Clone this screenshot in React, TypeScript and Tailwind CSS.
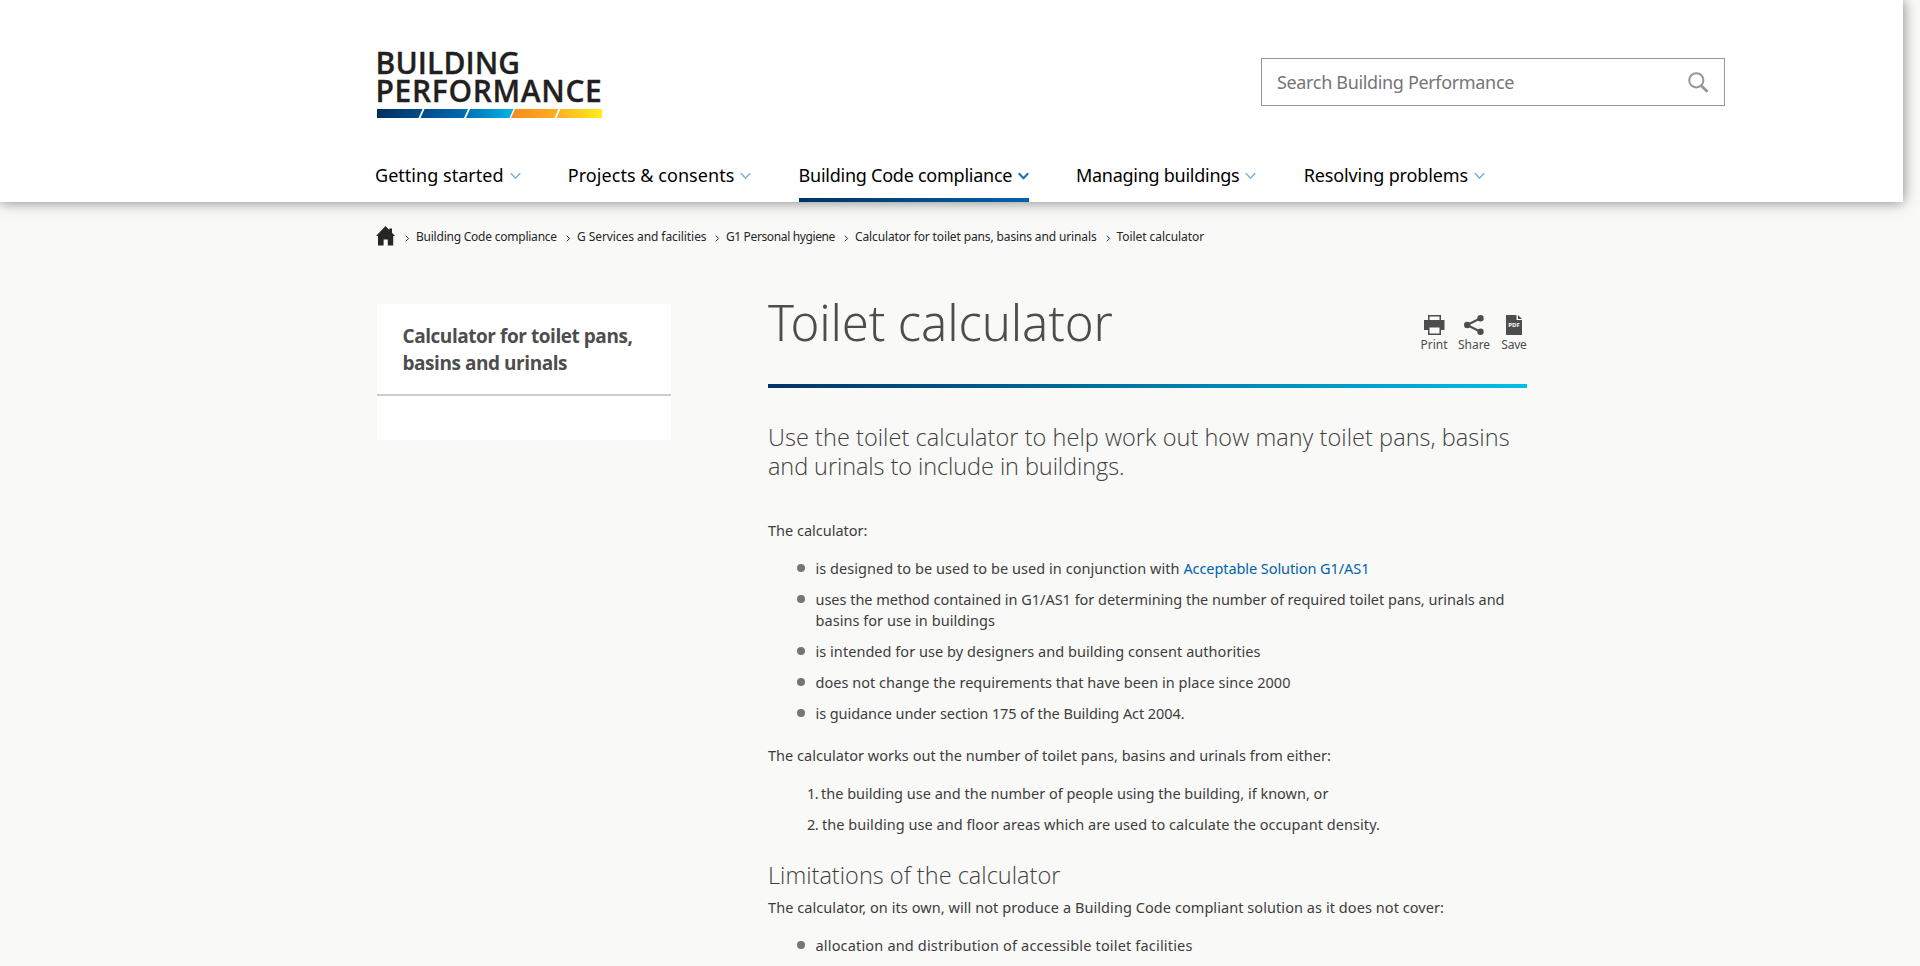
import type { ReactNode } from "react";

function Chevron({ active = false }: { active?: boolean }) {
  return (
    <svg
      width="11"
      height="8"
      viewBox="0 0 11 8"
      fill="none"
      strokeWidth={active ? 2 : 1.6}
      className={active ? "mt-0.5 shrink-0 stroke-[#1470b8]" : "mt-0.5 shrink-0 stroke-[#7fb2dc]"}
    >
      <path d="M0.8 1.2 5.5 6.2 10.2 1.2" />
    </svg>
  );
}

function Logo() {
  return (
    <a className="flex w-[225px] flex-col whitespace-nowrap font-['Open_Sans',sans-serif] text-[30px] font-semibold leading-[28px] text-[#231f20] [-webkit-text-stroke:0.3px_#231f20]">
      <span className="-ml-[1.500px] tracking-[0.100px]">BUILDING</span>
      <span className="-ml-[1.500px] tracking-[0.650px]">PERFORMANCE</span>
      <svg width="225" height="9" viewBox="0 0 225 9" className="mt-1">
        <defs>
          <linearGradient id="blue" x1="0" x2="136" y1="0" y2="0" gradientUnits="userSpaceOnUse">
            <stop offset="0" stopColor="#00305f" />
            <stop offset="0.6" stopColor="#0065ad" />
            <stop offset="1" stopColor="#00b5e6" />
          </linearGradient>
          <linearGradient id="gold" x1="134" x2="225" y1="0" y2="0" gradientUnits="userSpaceOnUse">
            <stop offset="0" stopColor="#f68b1f" />
            <stop offset="0.5" stopColor="#fdb022" />
            <stop offset="1" stopColor="#ffed1c" />
          </linearGradient>
        </defs>
        <path fill="url(#blue)" d="M0 0H45.5L41.5 9H0ZM47.5 0H91L87 9H43.5ZM93 0H136.500L132.500 9H89Z" />
        <path fill="url(#gold)" d="M138 0H181.500L177.500 9H134ZM183.500 0H225V9H179.500Z" />
      </svg>
    </a>
  );
}

const navItems = [
  { label: "Getting started", box: "w-[128.500px]", track: "tracking-[0.030px]" },
  { label: "Projects & consents", box: "w-[166.500px]", track: "tracking-[0.050px]" },
  { label: "Building Code compliance", box: "w-[213px]", track: "tracking-[-0.250px]", active: true },
  { label: "Managing buildings", box: "w-[163.500px]", track: "tracking-[-0.260px]" },
  { label: "Resolving problems", box: "w-[164px]", track: "tracking-[-0.120px]" },
];

const crumbs = [
  { label: "Building Code compliance", box: "w-[141px]", track: "tracking-[-0.230px]" },
  { label: "G Services and facilities", box: "w-[129px]", track: "tracking-[-0.070px]" },
  { label: "G1 Personal hygiene", box: "w-[109px]", track: "tracking-[-0.370px]" },
  { label: "Calculator for toilet pans, basins and urinals", box: "w-[241.500px]", track: "tracking-[-0.130px]" },
  { label: "Toilet calculator", box: "w-[87px]", track: "tracking-[-0.060px]" },
];

function Header() {
  return (
    <header className="relative h-[202px] w-[1903px] bg-white shadow-[0_0_13px_rgba(0,0,0,0.5)]">
      <div className="flex h-[148px] items-start justify-between pl-[377px] pr-[178px]">
        <div className="pt-[49px]">
          <Logo />
        </div>
        <div className="mt-[58px] flex h-12 w-[464px] items-center justify-between border border-[#979797] bg-white pl-[15px] pr-[15px]">
          <span className="whitespace-nowrap text-lg tracking-[-0.340px] text-[#757575]">Search Building Performance</span>
          <svg width="21" height="21" viewBox="0 0 21 21" fill="none" className="stroke-[#979797]">
            <circle cx="8.300" cy="8.300" r="7.100" strokeWidth="2" />
            <path d="M13 13.500 19.500 19.700" strokeWidth="2.800" />
          </svg>
        </div>
      </div>
      <nav className="flex gap-[47.300px] pl-[375px]">
        {navItems.map((n) => (
          <a key={n.label} className="flex h-[54px] flex-col justify-between">
            <span className="flex items-center gap-[6px] whitespace-nowrap pt-[15px] text-lg leading-6 text-black">
              <span className={`${n.box} ${n.track}`}>{n.label}</span>
              <Chevron active={n.active} />
            </span>
            {n.active && <span className="h-1 bg-linear-to-r from-[#003366] to-[#0062ac]" />}
          </a>
        ))}
      </nav>
    </header>
  );
}

function Breadcrumb() {
  return (
    <div className="flex h-5 items-center whitespace-nowrap text-[12px] leading-5 text-[#262626]">
      <svg width="19" height="20" viewBox="0 0 19 20" className="-ml-px mr-px fill-[#262626]">
        <path d="M9.500 0 13.300 3.900V2.500H16V6.700L19 10H17.200V19.500H11.800V13.500H7.600V19.500H2V10H0Z" />
      </svg>
      {crumbs.map((c) => (
        <span key={c.label} className="flex items-center pt-0.5">
          <svg width="5" height="7" viewBox="0 0 5 7" fill="none" className="ml-[9px] mr-[6px] mt-0.5 stroke-[#262626]">
            <path d="M0.800 0.700 3.600 3.500 0.800 6.300" />
          </svg>
          <span className={`${c.box} ${c.track}`}>{c.label}</span>
        </span>
      ))}
    </div>
  );
}

function Tools() {
  return (
    <div className="flex text-[12px] leading-[14px] text-[#4d4d4d]">
      <a className="flex w-[28px] flex-col items-center">
        <svg width="21" height="20" viewBox="0 0 21 20" className="fill-[#4d4d4d]">
          <path fillRule="evenodd" d="M4 0H17V5H20.500V15H17V20H4V15H0V5H4ZM5.500 1.500V5H15.500V1.500ZM5.500 12.500V18.500H15.500V12.500Z" />
        </svg>
        <span className="pt-[3px]">Print</span>
      </a>
      <a className="ml-[10px] flex w-[32px] flex-col items-center">
        <svg width="20" height="20" viewBox="0 0 20 20" className="fill-[#4d4d4d]">
          <path d="M17 3 3 10 17 17" fill="none" stroke="#4d4d4d" strokeWidth="2" />
          <circle cx="16.500" cy="3.200" r="3.200" />
          <circle cx="3.200" cy="10" r="3.200" />
          <circle cx="16.500" cy="16.800" r="3.200" />
        </svg>
        <span className="pt-[3px]">Share</span>
      </a>
      <a className="ml-[11px] flex w-[26px] flex-col items-center">
        <svg width="16" height="20" viewBox="0 0 16 20">
          <path className="fill-[#4d4d4d]" d="M0 0H10.500V5H16V20H0ZM12 0 16 4H12Z" />
          <text x="8" y="12.300" textAnchor="middle" fontSize="6" fontWeight="700" fill="#fff" textLength="11.500" lengthAdjust="spacingAndGlyphs">PDF</text>
        </svg>
        <span className="pt-[3px] tracking-[-0.200px]">Save</span>
      </a>
    </div>
  );
}

function Bullet({ children, track = "" }: { children: ReactNode; track?: string }) {
  return (
    <li className={`flex gap-[10.500px] ${track}`}>
      <span className="mt-[6px] size-2 shrink-0 rounded-full bg-[#757575]" />
      <span>{children}</span>
    </li>
  );
}

export default function App() {
  return (
    <div className="h-[966px] overflow-hidden bg-[#f9f9f7] font-['Noto_Sans',sans-serif]">
      <Header />
      <div className="ml-[377px] w-[1150px] pt-6">
        <Breadcrumb />
        <div className="flex items-start justify-between pt-[45px]">
          <aside className="mt-[13px] h-[136px] w-[294px] bg-white">
            <h2 className="h-[92px] whitespace-nowrap border-b-2 border-[#cccccc] px-[25.500px] pt-[19px] font-['Open_Sans',sans-serif] text-[19px] font-bold leading-[27px] tracking-[-0.450px] text-[#4d4d4d]">
              Calculator for toilet pans,
              <br />
              basins and urinals
            </h2>
          </aside>
          <main className="w-[759px] text-[14.500px] leading-[21px] text-[#3d3d3d]">
            <div className="flex h-[97px] items-start justify-between border-b-4 border-transparent [border-image:linear-gradient(to_right,#003366,#00bfe8)_1]">
              <h1 className="whitespace-nowrap text-[49px] font-light leading-[62px] tracking-[-0.130px] text-[#4d4d4d]">Toilet calculator</h1>
              <div className="pt-6">
                <Tools />
              </div>
            </div>
            <p className="mt-[35px] whitespace-nowrap font-['Open_Sans',sans-serif] text-[23.500px] font-light leading-[29px] tracking-[0.050px] text-[#3f3f3f]">
              Use the toilet calculator to help work out how many toilet pans, basins
              <br />
              <span className="tracking-[-0.080px]">and urinals to include in buildings.</span>
            </p>
            <p className="mt-[39px]">The calculator:</p>
            <ul className="mt-[17px] flex flex-col gap-[10px] whitespace-nowrap pl-[29px]">
              <Bullet track="tracking-[0.050px]">
                is designed to be used to be used in conjunction with{" "}
                <a className="tracking-[-0.075px] text-[#0062ac]">Acceptable Solution G1/AS1</a>
              </Bullet>
              <Bullet>
                <span className="tracking-[-0.023px]">uses the method contained in G1/AS1 for determining the number of required toilet pans, urinals and</span>
                <br />
                <span className="tracking-[0.050px]">basins for use in buildings</span>
              </Bullet>
              <Bullet track="tracking-[0.044px]">is intended for use by designers and building consent authorities</Bullet>
              <Bullet track="tracking-[0.029px]">does not change the requirements that have been in place since 2000</Bullet>
              <Bullet track="tracking-[-0.075px]">is guidance under section 175 of the Building Act 2004.</Bullet>
            </ul>
            <p className="mt-[21px] tracking-[0.031px]">
              The calculator works out the number of toilet pans, basins and urinals from either:
            </p>
            <ol className="mt-[17px] flex flex-col gap-[10px] whitespace-nowrap pl-[39px]">
              <li className="flex">
                <span className="w-[14px] tracking-[-0.500px]">1.</span>
                <span>the building use and the number of people using the building, if known, or</span>
              </li>
              <li className="flex">
                <span className="w-[15px] tracking-[-0.500px]">2.</span>
                <span className="tracking-[0.051px]">the building use and floor areas which are used to calculate the occupant density.</span>
              </li>
            </ol>
            <h2 className="mt-[26px] font-['Open_Sans',sans-serif] text-[23.500px] font-light leading-[29px] tracking-[0.020px] text-[#3f3f3f]">
              Limitations of the calculator
            </h2>
            <p className="mt-[7px] whitespace-nowrap tracking-[0.067px]">
              The calculator, on its own, will not produce a Building Code compliant solution as it does not cover:
            </p>
            <ul className="mt-[17px] pl-[29px]">
              <Bullet track="tracking-[0.174px]">allocation and distribution of accessible toilet facilities</Bullet>
            </ul>
          </main>
        </div>
      </div>
    </div>
  );
}
